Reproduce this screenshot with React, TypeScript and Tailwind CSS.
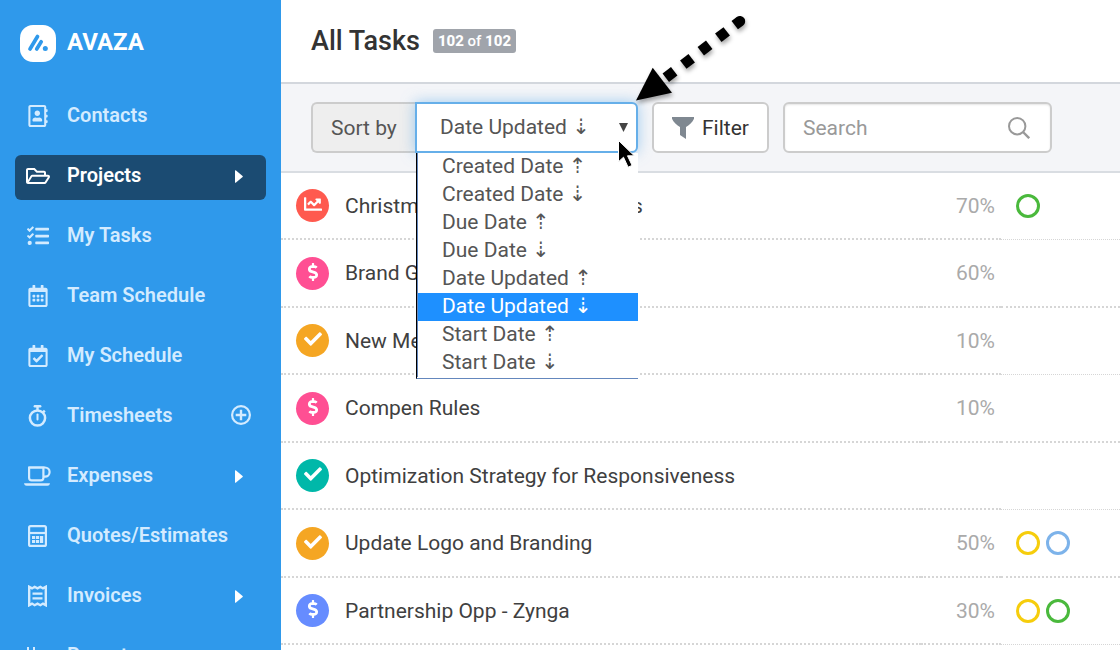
import type { ReactNode } from "react";
import {
  FaChartLine,
  FaCheck,
  FaDollarSign,
  FaRegAddressBook,
  FaRegCalendarAlt,
  FaRegCalendarCheck,
  FaRegFolderOpen,
  FaTasks,
} from "react-icons/fa";

function StopwatchIcon() {
  return (
    <svg width="19" height="22" viewBox="0 0 19 22" fill="none" stroke="currentColor" aria-hidden="true">
      <circle cx="9.5" cy="13" r="7.6" strokeWidth="2.5" />
      <path d="M6.8 1.2h5.4" strokeWidth="2.4" strokeLinecap="round" />
      <path d="M9.5 1v4M15 7.4l1.8-1.8" strokeWidth="2.4" />
      <path d="M9.5 9.5v5" strokeWidth="2" strokeLinecap="round" />
    </svg>
  );
}

function CoffeeIcon() {
  return (
    <svg width="27" height="22" viewBox="0 0 27 22" fill="none" stroke="currentColor" strokeWidth="2.2" aria-hidden="true">
      <path d="M5.1 2.5H21a4.6 4.6 0 0 1 0 9.2h-1.6" />
      <path d="M5.1 2.5h14.3v10.2a2.6 2.6 0 0 1-2.6 2.6H7.7a2.6 2.6 0 0 1-2.6-2.6z" />
      <path d="M0 18.2h26c-.3 1.7-1.2 2.5-2.6 2.5H2.6C1.2 20.7.3 19.9 0 18.2z" fill="currentColor" stroke="none" />
    </svg>
  );
}

function CalculatorIcon() {
  return (
    <svg width="19" height="22" viewBox="0 0 19 22" fill="none" stroke="currentColor" strokeWidth="2.2" aria-hidden="true">
      <rect x="1.1" y="1.1" width="16.8" height="19.8" rx="1.5" />
      <path d="M1 8h17" />
      <g fill="currentColor" stroke="none">
        <rect x="4" y="11" width="3.2" height="3" />
        <rect x="8" y="11" width="3.2" height="3" />
        <rect x="4" y="15" width="3.2" height="3" />
        <rect x="8" y="15" width="3.2" height="3" />
        <rect x="12" y="11" width="3.2" height="7" />
      </g>
    </svg>
  );
}

function ReceiptIcon() {
  return (
    <svg width="19" height="22" viewBox="0 0 19 22" fill="none" stroke="currentColor" strokeWidth="2.4" aria-hidden="true">
      <path d="M1.2 1.8l2.8 1.6 2.6-1.6 2.9 1.6 2.9-1.6L15 3.4l2.8-1.6v18.4L15 18.6l-2.6 1.6-2.9-1.6-2.9 1.6L4 18.6l-2.8 1.6z" />
      <path d="M4.5 8.6h10M4.5 13.4h10" />
    </svg>
  );
}

function ReportsIcon() {
  return (
    <svg width="22" height="22" viewBox="0 0 22 22" fill="none" stroke="currentColor" strokeWidth="2" aria-hidden="true">
      <path d="M1 2v18h20M7 2v14M12 8v8M17 5v11" />
    </svg>
  );
}

function PlusIcon() {
  return (
    <svg width="20" height="20" viewBox="0 0 20 20" fill="none" stroke="currentColor" aria-hidden="true">
      <circle cx="10" cy="10" r="8.9" strokeWidth="2.2" />
      <path d="M10 4.7v10.6M4.7 10h10.6" strokeWidth="2.4" />
    </svg>
  );
}

function Caret() {
  return (
    <svg width="8" height="13" viewBox="0 0 8 13" className="mr-2 mt-1 text-white" fill="currentColor" aria-hidden="true">
      <path d="M0 .8C0 .2.5 0 1 .4l6.6 5.5c.4.4.4.8 0 1.2L1 12.6c-.5.4-1 .2-1-.4z" />
    </svg>
  );
}

type NavItem = { label: string; icon: ReactNode; end?: ReactNode; active?: boolean };

const navItems: NavItem[] = [
  { label: "Contacts", icon: <FaRegAddressBook size={22} /> },
  { label: "Projects", icon: <FaRegFolderOpen size={24} />, end: <Caret />, active: true },
  { label: "My Tasks", icon: <FaTasks size={22} /> },
  { label: "Team Schedule", icon: <FaRegCalendarAlt size={22} /> },
  { label: "My Schedule", icon: <FaRegCalendarCheck size={22} /> },
  { label: "Timesheets", icon: <StopwatchIcon />, end: <PlusIcon /> },
  { label: "Expenses", icon: <CoffeeIcon />, end: <Caret /> },
  { label: "Quotes/Estimates", icon: <CalculatorIcon /> },
  { label: "Invoices", icon: <ReceiptIcon />, end: <Caret /> },
  { label: "Reports", icon: <ReportsIcon /> },
];

function Sidebar() {
  return (
    <aside className="w-[281px] shrink-0 overflow-hidden bg-[#2f99eb] px-[15px] pt-[25px]">
      <a href="#home" className="flex items-center gap-[11px] pl-[5px] text-white">
        <svg width="36" height="37" viewBox="0 0 36 37" aria-hidden="true">
          <rect width="36" height="37" rx="13" fill="#fff" />
          <g stroke="#2f99eb" strokeWidth="3.7" strokeLinecap="round">
            <path d="M10 24L17.5 11.5" />
            <path d="M16.7 24L21.2 16.8" />
          </g>
          <circle cx="25.3" cy="23.5" r="2.5" fill="#2f99eb" />
        </svg>
        <span className="pb-1 text-2xl leading-8 font-bold">AVAZA</span>
      </a>
      <nav className="mt-[33px] flex flex-col gap-[15px]">
        {navItems.map((item) => (
          <a
            key={item.label}
            href={"#" + item.label}
            className={
              item.active
                ? "flex h-[45px] items-center rounded-md bg-[#1b4b72] pr-[15px] text-white"
                : "flex h-[45px] items-center rounded-md pr-[15px] text-[#d3ebff]"
            }
          >
            <span className="flex h-full w-[45px] items-center justify-center pb-[3px]">{item.icon}</span>
            <span className="ml-[7px] flex-1 pb-[6px] text-xl leading-6 font-semibold">{item.label}</span>
            <span className="pb-[6px]">{item.end}</span>
          </a>
        ))}
      </nav>
    </aside>
  );
}

const sortOptions = [
  "Created Date ⇡",
  "Created Date ⇣",
  "Due Date ⇡",
  "Due Date ⇣",
  "Date Updated ⇡",
  "Date Updated ⇣",
  "Start Date ⇡",
  "Start Date ⇣",
];
const selectedOption = "Date Updated ⇣";

function SortControl() {
  return (
    <div className="flex h-[51px]">
      <label
        htmlFor="sort"
        className="flex w-[104px] items-center rounded-l-md border-2 border-r-0 border-[#ccc] bg-[#eee] pl-[18px] text-[#555]"
      >
        Sort by
      </label>
      <div className="relative w-[223px]">
        <select
          id="sort"
          defaultValue={selectedOption}
          className="h-full w-full appearance-none rounded-r-md border-2 border-[#66afe9] bg-white pb-[2px] pl-[23px] text-[#555] shadow-[0_0_14px_rgba(102,175,233,0.6)] outline-none"
        >
          {sortOptions.map((option) => (
            <option key={option}>{option}</option>
          ))}
        </select>
        <svg
          width="9"
          height="9"
          viewBox="0 0 9 9"
          className="pointer-events-none absolute top-[21px] right-[10px]"
          aria-hidden="true"
        >
          <path d="M0 0h9L4.5 9z" fill="#444" />
        </svg>
        <ul
          role="listbox"
          aria-label="Sort order"
          className="absolute top-full right-0 left-px z-10 border-b border-l border-b-[#6487bd] border-l-black bg-white pb-px text-[#555]"
        >
          {sortOptions.map((option) => (
            <li
              key={option}
              role="option"
              aria-selected={option === selectedOption}
              className={
                option === selectedOption
                  ? "h-7 border-l border-[#6487bd] bg-[#1e90ff] pl-6 leading-[26px] text-white"
                  : "h-7 border-l border-[#6487bd] pl-6 leading-[26px]"
              }
            >
              {option}
            </li>
          ))}
        </ul>
        <svg
          width="20"
          height="30"
          viewBox="0 0 20 30"
          className="pointer-events-none absolute top-[37px] left-[202px] z-20"
          aria-hidden="true"
        >
          <path
            d="M1.5 1.5v21.2l5-4.5 4.6 10 4-1.8-4.6-9.6h6.8z"
            fill="#000"
            stroke="#fff"
            strokeWidth="1"
          />
        </svg>
        <svg
          width="124"
          height="100"
          viewBox="0 0 124 100"
          className="pointer-events-none absolute bottom-[48px] left-[217px] z-20 drop-shadow-[1px_3px_2px_rgba(0,0,0,0.35)]"
          aria-hidden="true"
        >
          <path d="M4 95.5L20.7 62.8l19.3 25z" />
          <rect x="-5.3" y="-5.3" width="10.6" height="10.6" transform="translate(38 69.5) rotate(-37.3)" />
          <rect x="-5.3" y="-5.3" width="10.6" height="10.6" transform="translate(55.5 56.4) rotate(-37.3)" />
          <rect x="-5.3" y="-5.3" width="10.6" height="10.6" transform="translate(73 43) rotate(-37.3)" />
          <rect x="-5.3" y="-5.3" width="10.6" height="10.6" transform="translate(90.5 29.6) rotate(-37.3)" />
          <path d="M-6-5.3h6.5a5.3 5.3 0 0 1 0 10.6H-6z" transform="translate(107.5 16.5) rotate(-37.3)" />
        </svg>
      </div>
    </div>
  );
}

const statusIcons = {
  chart: <FaChartLine size={18} />,
  dollar: <FaDollarSign size={18} />,
  check: <FaCheck size={18} />,
};

const tagColors = {
  green: "size-6 rounded-full border-3 border-[#4ab93c]",
  yellow: "size-6 rounded-full border-3 border-[#f6cd0c]",
  blue: "size-6 rounded-full border-3 border-[#7db3ea]",
};

type Task = {
  name: string;
  icon: keyof typeof statusIcons;
  color: string;
  percent?: string;
  tags: (keyof typeof tagColors)[];
};

const tasks: Task[] = [
  { name: "Christmas Marketing Templates", icon: "chart", color: "bg-[#ff5a4f]", percent: "70%", tags: ["green"] },
  { name: "Brand Guide", icon: "dollar", color: "bg-[#ff4f93]", percent: "60%", tags: [] },
  { name: "New Menu", icon: "check", color: "bg-[#f5a623]", percent: "10%", tags: [] },
  { name: "Compen Rules", icon: "dollar", color: "bg-[#ff4f93]", percent: "10%", tags: [] },
  { name: "Optimization Strategy for Responsiveness", icon: "check", color: "bg-[#00b8a9]", tags: [] },
  { name: "Update Logo and Branding", icon: "check", color: "bg-[#f5a623]", percent: "50%", tags: ["yellow", "blue"] },
  { name: "Partnership Opp - Zynga", icon: "dollar", color: "bg-[#668cff]", percent: "30%", tags: ["yellow", "green"] },
];

function TaskTable() {
  return (
    <table className="w-full border-separate border-spacing-0">
      <tbody>
        {tasks.map((task) => (
          <tr key={task.name} className="group odd:h-[67px] even:h-[68px]">
            <td className="border-b-2 border-dotted border-[#d6d6d6] p-0 pl-[15px]">
              <div className="flex items-center gap-4">
                <span className={"flex size-[33px] shrink-0 items-center justify-center rounded-full pb-[3px] text-white " + task.color}>
                  {statusIcons[task.icon]}
                </span>
                <span className="text-[#404040]">{task.name}</span>
              </div>
            </td>
            <td className="w-[80px] border-b-2 border-dotted border-[#d6d6d6] p-0 pr-[6px] text-right text-[#aaa]">
              {task.percent}
            </td>
            <td className="w-[119px] border-b-2 border-dotted border-[#d6d6d6] p-0 pl-[15px] group-odd:border-b">
              <div className="flex gap-[6px]">
                {task.tags.map((tag) => (
                  <span key={tag} className={tagColors[tag]} />
                ))}
              </div>
            </td>
          </tr>
        ))}
      </tbody>
    </table>
  );
}

export default function App() {
  return (
    <div className="flex h-screen overflow-hidden bg-white font-[Roboto,'DejaVu_Sans',sans-serif] text-[21px] leading-6">
      <Sidebar />
      <main className="min-w-0 flex-1">
        <header className="flex h-[84px] items-center gap-[13px] border-b-2 border-[#d3d7dd] pl-[30px]">
          <h1 className="text-[27px] leading-8 font-medium text-[#333]">All Tasks</h1>
          <span className="rounded-[3px] bg-[#a0a4ab] px-[5px] text-[15px] leading-6 font-medium text-white">
            <b className="font-extrabold">102</b> of <b className="font-extrabold">102</b>
          </span>
        </header>
        <div className="flex items-center gap-[14px] border-b-2 border-[#d9dde2] bg-[#f4f5f8] py-[18px] pl-[30px]">
          <SortControl />
          <button
            type="button"
            className="flex h-[51px] items-center gap-2 rounded-md border-2 border-[#ccc] bg-white px-[18px] text-[#333]"
          >
            <svg width="22" height="22" viewBox="0 0 22 22" fill="#7f8891" aria-hidden="true">
              <path d="M0 0h22v1.8c-1.3 3.4-5 6.4-8 8.2V22l-6-4v-8C5 8.2 1.3 5.2 0 1.8z" />
            </svg>
            Filter
          </button>
          <div className="flex h-[51px] w-[269px] items-center rounded-md border-2 border-[#ccc] bg-white pr-5 pl-[18px] shadow-[inset_0_1px_2px_rgba(0,0,0,0.1)]">
            <input
              type="search"
              aria-label="Search"
              placeholder="Search"
              className="min-w-0 flex-1 bg-transparent text-[#555] outline-none placeholder:text-[#999]"
            />
            <svg width="22" height="22" viewBox="0 0 22 22" fill="none" stroke="#999" strokeWidth="2" aria-hidden="true">
              <circle cx="9.2" cy="9.2" r="8.2" />
              <path d="M15 15l6.2 6.2" strokeWidth="2.4" />
            </svg>
          </div>
        </div>
        <TaskTable />
      </main>
    </div>
  );
}
